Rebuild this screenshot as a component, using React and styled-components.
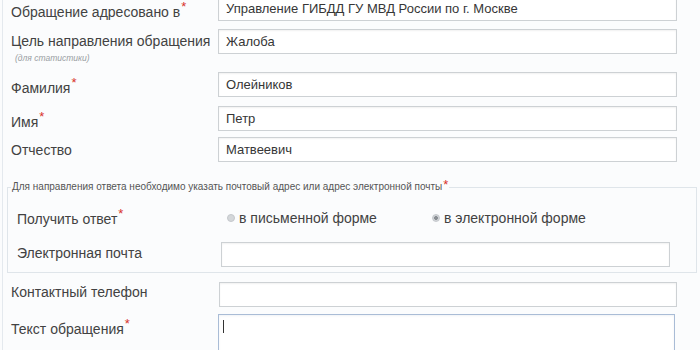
import React from 'react';
import styled, { createGlobalStyle } from 'styled-components';

const GlobalStyle = createGlobalStyle`
    html, body {
        margin: 0;
        padding: 0;
        background: #fbfcfd;
        overflow: hidden;
    }
    body {
        font-family: "Liberation Sans", Arial, sans-serif;
        color: #444;
    }
`;

const Form = styled.form`
    width: 697px;
    height: 354px;
    margin: -4px 0 0 2px;
    border-left: 1px solid #e4e9ee;
    box-sizing: border-box;
    overflow: hidden;
`;

const Row = styled.div`
    display: grid;
    grid-template-columns: ${props => props.$labelWidth || 215}px 459px;
    align-items: start;
    min-height: ${props => props.$h}px;
    margin-bottom: ${props => props.$mb || 0}px;
`;

const Label = styled.div`
    padding: ${props => props.$top || 0}px 0 0 ${props => props.$left || 8}px;
    font-size: 14px;
    line-height: 18px;
    color: #424242;
    white-space: nowrap;
`;

const Required = styled.span`
    color: #d8322a;
    font-size: 13px;
    line-height: 8px;
    vertical-align: top;
    margin-left: 1px;
`;

const Hint = styled.div`
    font-size: 8.5px;
    font-style: italic;
    color: #9a9ea3;
    padding-left: 4px;
    line-height: 12px;
    margin-top: 2px;
`;

const Input = styled.div`
    box-sizing: border-box;
    width: ${props => props.$w || 459}px;
    height: 25px;
    padding: 0 7px;
    margin-left: ${props => props.$shift || 0}px;
    background: #fff;
    border: 1px solid #cdd1d4;
    box-shadow: inset 0 1px 2px rgba(0, 0, 0, 0.06);
    font-size: 13px;
    line-height: 23px;
    color: #363636;
    white-space: nowrap;
    overflow: hidden;
`;

const TextArea = styled.div`
    box-sizing: border-box;
    width: 457px;
    height: 60px;
    padding: 4px 4px;
    background: #fff;
    border: 1px solid #a9bcd6;
    box-shadow: inset 0 1px 2px rgba(60, 90, 130, 0.08);
`;

const Caret = styled.span`
    display: inline-block;
    width: 1px;
    height: 13px;
    background: #333;
`;

const Fieldset = styled.fieldset`
    box-sizing: border-box;
    width: 690px;
    margin: 0 0 9px 4px;
    padding: 13px 0 5px 8px;
    border: 1px solid #dfe5ea;
    min-width: 0;
`;

const Legend = styled.legend`
    padding: 0 1px;
    margin-left: -5px;
    font-size: 10px;
    line-height: 12px;
    color: #555;
`;

const RadioGroup = styled.div`
    display: flex;
    align-items: center;
    height: 24px;
    padding-left: 6px;
`;

const RadioOption = styled.label`
    display: flex;
    align-items: center;
    width: ${props => props.$w}px;
    font-size: 14px;
    color: #424242;
    white-space: nowrap;
`;

const RadioDot = styled.span`
    box-sizing: border-box;
    width: 8px;
    height: 8px;
    margin-right: 4px;
    border-radius: 50%;
    background: ${props => (props.$checked ? 'radial-gradient(circle, #8a8f94 0 1.6px, #d2d5d8 2.2px)' : '#d4d7da')};
    border: 1px solid #c4c8cc;
`;

const fields = [
    { label: 'Фамилия', value: 'Олейников', required: true, h: 34, top: 7 },
    { label: 'Имя', value: 'Петр', required: true, h: 31, top: 7 },
    { label: 'Отчество', value: 'Матвеевич', required: false, h: 26, top: 4, mb: 18 },
];

export default function App() {
    return (
        <>
            <GlobalStyle />
            <Form>
                <Row $h={33}>
                    <Label $top={7}>
                        Обращение адресовано в<Required>*</Required>
                    </Label>
                    <Input>Управление ГИБДД ГУ МВД России по г. Москве</Input>
                </Row>
                <Row $h={43}>
                    <Label $top={3}>
                        Цель направления обращения
                        <Hint>(для статистики)</Hint>
                    </Label>
                    <Input>Жалоба</Input>
                </Row>
                {fields.map(f => (
                    <Row key={f.label} $h={f.h} $mb={f.mb}>
                        <Label $top={f.top}>
                            {f.label}
                            {f.required && <Required>*</Required>}
                        </Label>
                        <Input>{f.value}</Input>
                    </Row>
                ))}
                <Fieldset>
                    <Legend>
                        Для направления ответа необходимо указать почтовый адрес или адрес электронной почты
                        <Required>*</Required>
                    </Legend>
                    <Row $labelWidth={205} $h={24} $mb={12}>
                        <Label $top={4} $left={1}>
                            Получить ответ<Required>*</Required>
                        </Label>
                        <RadioGroup>
                            <RadioOption $w={205}>
                                <RadioDot />в письменной форме
                            </RadioOption>
                            <RadioOption $w={200}>
                                <RadioDot $checked />в электронной форме
                            </RadioOption>
                        </RadioGroup>
                    </Row>
                    <Row $labelWidth={205} $h={24}>
                        <Label $top={2} $left={1}>Электронная почта</Label>
                        <Input $w={449} />
                    </Row>
                </Fieldset>
                <Row $h={32}>
                    <Label $top={1}>Контактный телефон</Label>
                    <Input $shift={1} $w={458} />
                </Row>
                <Row $h={40}>
                    <Label $top={6}>
                        Текст обращения<Required>*</Required>
                    </Label>
                    <TextArea>
                        <Caret />
                    </TextArea>
                </Row>
            </Form>
        </>
    );
}
